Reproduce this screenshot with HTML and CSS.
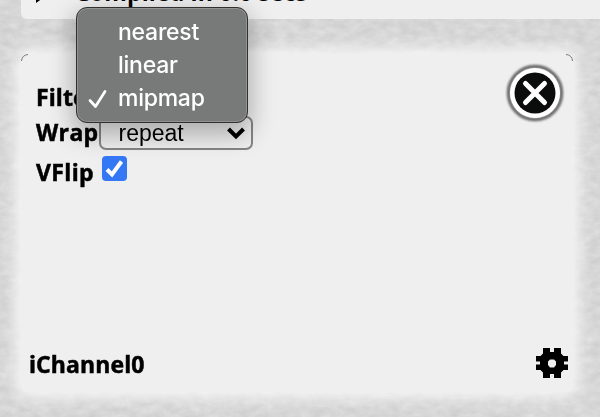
FILE: index.html
```html
<!DOCTYPE html>
<html lang="en">
<head>
<meta charset="utf-8">
<title>Shader inputs</title>
<link rel="stylesheet" href="styles.css">
</head>
<body>
<svg class="texture" width="600" height="417" aria-hidden="true">
  <filter id="paper" x="0" y="0" width="100%" height="100%" color-interpolation-filters="sRGB">
    <feTurbulence type="fractalNoise" baseFrequency="0.08 0.14" numOctaves="4" seed="4"/>
    <feColorMatrix values="0.1 0 0 0 0.79  0.1 0 0 0 0.79  0.1 0 0 0 0.79  0 0 0 0 1"/>
  </filter>
  <rect width="600" height="417" filter="url(#paper)"/>
</svg>
<header class="status">
  <svg class="arrow" width="16" height="20" viewBox="0 0 16 20"><path d="M1 0L15 9L1 19Z"/></svg>
  <span class="status-text">Compiled in 0.0 secs</span>
</header>
<main class="channel">
  <svg class="edge" width="552" height="9" viewBox="0 0 552 9"><path d="M.5 7Q1 1 7 .5M545 .5Q551 1 551.500 7"/></svg>
  <div class="settings">
    <div class="row filter"><span class="label">Filter</span><span class="select active"></span>
      <ul class="menu">
        <li>nearest</li>
        <li>linear</li>
        <li><svg class="tick" width="20" height="20" viewBox="0 0 20 20"><path d="M2 11.5L7.5 17.5L17 2.5"/></svg>mipmap</li>
      </ul>
    </div>
    <div class="row wrap"><span class="label">Wrap</span><span class="select">repeat<svg class="chevron" width="18" height="13" viewBox="0 0 18 13"><path d="M1.5 2L9 9.5L16.500 2"/></svg></span></div>
    <div class="row vflip"><span class="label">VFlip</span><span class="check"><svg width="25" height="25" viewBox="0 0 25 25"><path d="M5 13.500L10 18.500L19.500 5.500"/></svg></span></div>
  </div>
  <svg class="close" width="60" height="60" viewBox="0 0 60 60">
    <circle class="halo" cx="30" cy="30" r="26.500"/>
    <circle class="ring" cx="30" cy="30" r="25"/>
    <circle class="disc" cx="30" cy="30" r="20.500"/>
    <path d="M20.500 20.500L39.500 39.500M39.500 20.500L20.500 39.500"/>
  </svg>
  <footer class="footer">
    <span class="label">iChannel0</span>
    <svg class="gear" width="32" height="30" viewBox="0 0 32 30"><path fill-rule="evenodd" d="M7 0H14V4H18V0H25V5.500L27.500 8H32V13.500H28V16.500H32V22H27.500L25 24.500V30H18V26H14V30H7V24.500L4.500 22H0V16.500H4V13.500H0V8H4.500L7 5.500ZM14 11.500L12 13.500V17L14 19.500H18L20 17V13.500L18 11.500Z"/></svg>
  </footer>
</main>
</body>
</html>
```
FILE: styles.css
```css
* { box-sizing: border-box; }
body {
  margin: 0;
  width: 600px;
  height: 417px;
  overflow: hidden;
  background: #d8d8d8;
  color: #000;
  font-family: "Open Sans", "Noto Sans", sans-serif;
  font-size: 23px;
  font-weight: 700;
}
svg { display: block; }
.texture { position: fixed; inset: 0; z-index: -1; }
.status {
  display: flex;
  align-items: flex-end;
  height: 19px;
  margin-left: 21px;
  padding: 0 0 15px 14px;
  background: #efefef;
  border-radius: 0 0 0 6px;
}
.arrow { margin-bottom: 0; flex: none; }
.status-text { margin-left: 24px; line-height: 24px; letter-spacing: .15px; white-space: nowrap; }
.channel {
  position: relative;
  display: flex;
  flex-direction: column;
  justify-content: space-between;
  width: 552px;
  height: 338px;
  margin: 35px 0 0 21px;
  background: #efefef;
  border-radius: 6px;
  box-shadow: 0 0 16px 5px #f8f8f8;
}
.edge { position: absolute; left: 0; top: 0; }
.edge path { fill: none; stroke: #777; stroke-width: 1; }
.settings { padding: 26px 0 0 15px; }
.row { display: flex; align-items: center; height: 35px; }
.label { line-height: 34px; white-space: nowrap; letter-spacing: .1px; -webkit-text-stroke: .5px #000; }
.wrap .label, .vflip .label { letter-spacing: .35px; }
.filter { position: relative; }
.filter .label, .wrap .label { margin-top: -1px; }
.select {
  display: flex;
  align-items: center;
  width: 154px;
  height: 34px;
  padding: 1px 6px 0 18px;
  justify-content: space-between;
  border: 2px solid #858585;
  border-radius: 7px;
  font: 400 23px "Liberation Sans", sans-serif;
}
.active { border-color: #9eb7c5; width: 150px; }
.chevron path { fill: none; stroke: #000; stroke-width: 4; }
.menu {
  position: absolute;
  z-index: 2;
  left: 40px;
  top: -73px;
  width: 172px;
  height: 116px;
  margin: 0;
  padding: 8px 0 0 41px;
  list-style: none;
  color: #fff;
  background: #787979;
  border: 1px solid #303030;
  border-radius: 11px;
  box-shadow: inset 0 0 0 1px #929292, 0 9px 24px 3px rgba(0, 0, 0, .28);
  font: 500 23px/33px Inter, sans-serif;
  letter-spacing: -.25px;
}
.menu li { display: flex; align-items: center; height: 33px; }
.tick { margin: 0 10px 0 -30px; }
.tick path { fill: none; stroke: #fff; stroke-width: 2.7; stroke-linecap: round; stroke-linejoin: round; }
.vflip { height: 44px; }
.check { width: 25px; height: 25px; margin: -7px 0 0 8px; background: #3478f6; border-radius: 4px; }
.check path { fill: none; stroke: #fff; stroke-width: 4; }
.close { position: absolute; right: 8px; top: 9px; }
.halo { fill: none; stroke: #666; stroke-width: 3.5; filter: blur(1.200px); }
.ring { fill: #fff; }
.disc { fill: #0b0d0c; }
.close path { stroke: #fff; stroke-width: 5; stroke-linecap: round; }
.footer { display: flex; align-items: center; justify-content: space-between; padding: 0 5px 11px 8px; }
.gear { margin-top: -3px; }
```
